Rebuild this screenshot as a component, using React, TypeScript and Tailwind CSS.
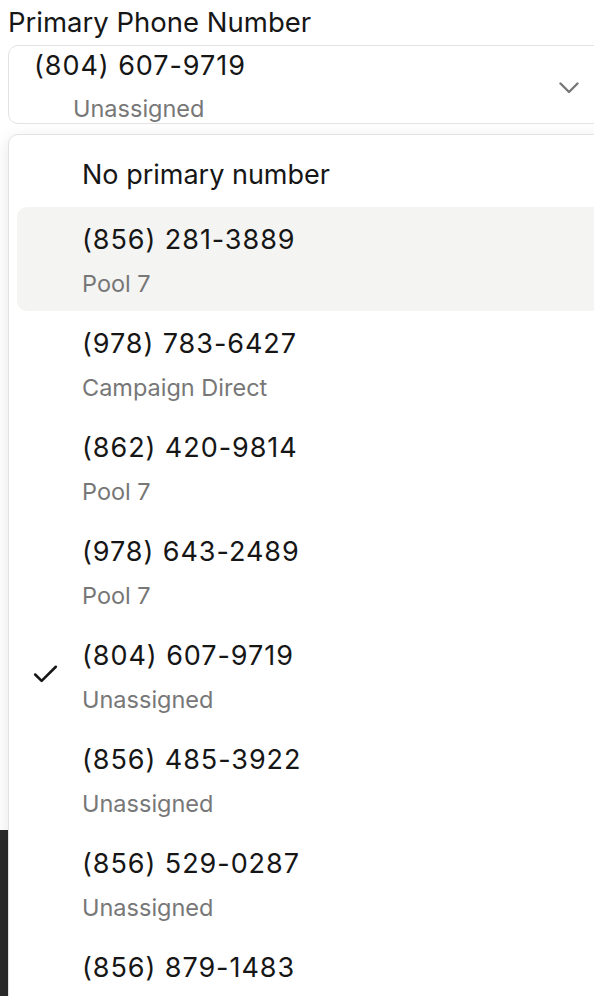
import { Check } from "lucide-react";

const items = [
  { n: "(856) 281-3889", s: "Pool 7", hl: true },
  { n: "(978) 783-6427", s: "Campaign Direct" },
  { n: "(862) 420-9814", s: "Pool 7" },
  { n: "(978) 643-2489", s: "Pool 7" },
  { n: "(804) 607-9719", s: "Unassigned", sel: true },
  { n: "(856) 485-3922", s: "Unassigned" },
  { n: "(856) 529-0287", s: "Unassigned" },
  { n: "(856) 879-1483", s: "Unassigned" },
];

export default function App() {
  return (
    <div className="relative h-[996px] w-[594px] overflow-hidden bg-white font-['Inter',sans-serif] text-[#161616]">
      {/* page behind the popover */}
      <div className="absolute bottom-0 left-0 top-[830px] w-[8px] bg-[#2b2b2b]" />

      <div className="flex flex-col px-2 pt-[4px]">
        <div className="text-[27.5px] leading-[36px]">Primary Phone Number</div>
        <div className="mr-[-20px] mt-[5px] flex h-[79px] items-center rounded-[10px] border border-[#e3e3e3] pl-[25px] pr-[26px]">
          <div className="flex flex-1 flex-col pt-[3px]">
            <div className="text-[27px] leading-[32px] tracking-[0.035em]">(804) 607-9719</div>
            <div className="ml-[39px] mt-[13px] text-[23.5px] leading-[28px] text-[#777]">Unassigned</div>
          </div>
          <svg width="20" height="12" viewBox="0 0 20 12" className="mt-[6px]" fill="none">
            <polyline points="1.5,1.5 10,10 18.5,1.5" stroke="#777" strokeWidth="2.4" strokeLinecap="round" strokeLinejoin="round" />
          </svg>
        </div>
      </div>

      <div className="absolute bottom-[-20px] left-2 right-[-20px] top-[134px] flex flex-col rounded-[10px] border border-[#e3e3e3] bg-white p-2 shadow-[0_4px_16px_rgba(0,0,0,0.10)]">
        <div className="flex py-[16px]">
          <div className="w-[65px] shrink-0" />
          <div className="text-[27px] leading-[32px]">No primary number</div>
        </div>
        {items.map((r) => (
          <div
            key={r.n + r.s}
            className={`flex items-center rounded-[10px] pb-[12px] pt-[17px] ${r.hl ? "bg-[#f4f4f3]" : ""}`}
          >
            <div className="mb-[6px] flex w-[65px] shrink-0 pl-[13px]">
              {r.sel && <Check size={31} strokeWidth={2} />}
            </div>
            <div className="flex flex-col">
              <div className="text-[27px] leading-[32px] tracking-[0.035em]">{r.n}</div>
              <div className="mt-[13px] text-[23.5px] leading-[30px] text-[#777]">{r.s}</div>
            </div>
          </div>
        ))}
      </div>
    </div>
  );
}
